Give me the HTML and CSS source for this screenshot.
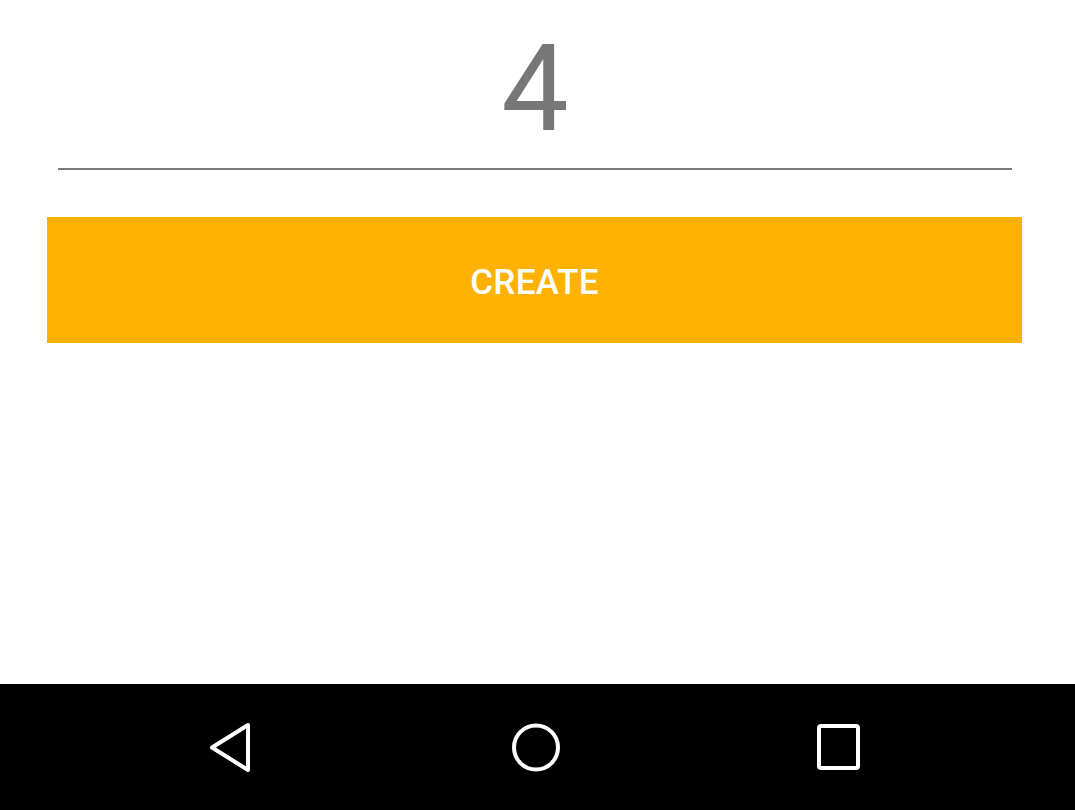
FILE: index.html
```html
<!DOCTYPE html>
<html>
<head>
<meta charset="utf-8">
<link rel="stylesheet" href="styles.css">
</head>
<body>
<div class="screen">
  <main class="content">
    <div class="field">
      <div class="value">4</div>
      <div class="underline"></div>
    </div>
    <button class="create">CREATE</button>
  </main>
  <nav class="navbar">
    <svg class="nav-icon" width="60" height="60" viewBox="0 0 60 60">
      <path d="M48 8 L48 53 L12 30.5 Z" fill="none" stroke="#fff" stroke-width="4" stroke-linejoin="round"/>
    </svg>
    <svg class="nav-icon" width="60" height="60" viewBox="0 0 60 60">
      <circle cx="30" cy="30.5" r="22" fill="none" stroke="#fff" stroke-width="4"/>
    </svg>
    <svg class="nav-icon" width="60" height="60" viewBox="0 0 60 60">
      <rect x="7" y="9" width="39" height="42" rx="2" fill="none" stroke="#fff" stroke-width="4"/>
    </svg>
  </nav>
</div>
</body>
</html>
```

FILE: styles.css
```css
* { box-sizing: border-box; }
html, body { margin: 0; padding: 0; background: #fff; }
.screen {
  width: 1075px;
  height: 810px;
  display: flex;
  flex-direction: column;
  font-family: Roboto, "Liberation Sans", sans-serif;
}
.content {
  flex: 1;
  padding: 29px 53px 0 47px;
  display: flex;
  flex-direction: column;
}
.field {
  padding: 0 10px 0 11px;
}
.value {
  height: 120px;
  font-size: 120px;
  line-height: 120px;
  text-align: center;
  color: #777;
}
.underline {
  margin-top: 19px;
  height: 2px;
  background: #7a7a7a;
}
.create {
  margin-top: 47px;
  height: 126px;
  width: 975px;
  border: none;
  background: #fdb100;
  color: #fff;
  font-family: Roboto, "Liberation Sans", sans-serif;
  font-weight: 500;
  font-size: 35px;
  letter-spacing: 0.3px;
  padding: 0;
  padding-top: 4px;
}
.navbar {
  height: 126px;
  background: #000;
  display: flex;
  align-items: center;
  gap: 246px;
  padding-left: 200px;
}
.nav-icon { display: block; }
```
